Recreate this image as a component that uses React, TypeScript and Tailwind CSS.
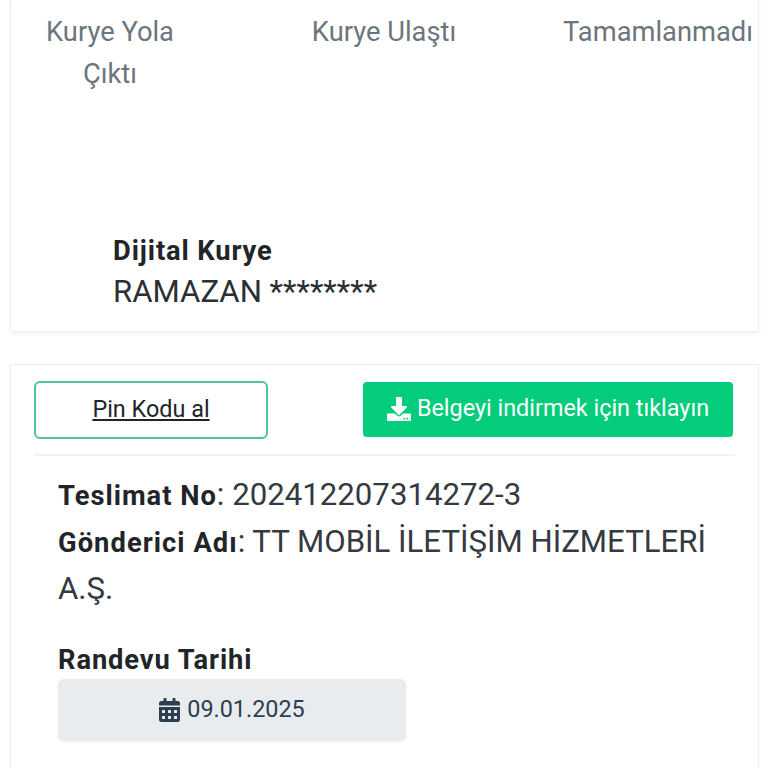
import React from 'react';
import { FaCalendarAlt, FaDownload } from 'react-icons/fa';

const App: React.FC = () => {
  return (
    <div className="w-[768px] h-[768px] overflow-hidden bg-white pl-[10px] pr-[9px] font-['Roboto',sans-serif]">
      {/* Courier card */}
      <div className="h-[332px] bg-white border-x border-b border-[#eceeef] shadow-[0_2px_4px_rgba(0,0,0,0.05)] rounded-b-[2px] flex flex-col">
        <div className="flex items-start pt-[11px] pl-[19px] text-center text-[27.3px] leading-[42px] text-[#6c757d]">
          <div className="w-[160px]">Kurye Yola Çıktı</div>
          <div className="w-[200px] ml-[94px]">Kurye Ulaştı</div>
          <div className="w-[190px] ml-[79px]">Tamamlanmadı</div>
        </div>
        <div className="pl-[102px] pt-[136px]">
          <div className="text-[27.3px] leading-[40px] font-bold text-[#212529] tracking-[0.9px]">Dijital Kurye</div>
          <div className="text-[31.2px] leading-[41px] text-[#2b3035]">RAMAZAN ********</div>
        </div>
      </div>

      {/* Delivery card */}
      <div className="mt-[32px] h-[420px] bg-white border-x border-t border-[#eceeef] px-[23px]">
        <div className="flex justify-between items-center pt-[16px] pb-[15px] border-b-2 border-[#f1f2f3]">
          <button className="w-[234px] h-[58px] border-2 border-[#4fc3a1] rounded-[6px] text-[23.4px] text-[#212529] underline bg-white">
            Pin Kodu al
          </button>
          <button className="w-[370px] h-[55px] mr-[2px] mb-[2px] bg-[#03cc7b] rounded-[4px] text-[23.4px] text-white flex items-center justify-center gap-[6px]">
            <FaDownload className="w-[24px] h-[24px]" />
            Belgeyi indirmek için tıklayın
          </button>
        </div>
        <div className="pl-[24px] pt-[16px]">
          <div className="text-[31.2px] leading-[46px] text-[#343a40]">
            <span className="text-[27.3px] font-bold text-[#212529] tracking-[1px]">Teslimat No</span>: 202412207314272-3
          </div>
          <div className="text-[31.2px] leading-[46px] text-[#343a40]">
            <span className="text-[27.3px] font-bold text-[#212529] tracking-[1.05px]">Gönderici Adı</span>: TT MOBİL İLETİŞİM HİZMETLERİ A.Ş.
          </div>
          <div className="mt-[29px] text-[27.3px] leading-[38px] font-bold text-[#212529] tracking-[0.9px]">Randevu Tarihi</div>
          <div className="w-[348px] h-[62px] bg-[#e9ecef] rounded-[6px] shadow-[0_1px_3px_rgba(0,0,0,0.08)] flex items-center justify-center gap-[7px] text-[23.4px] text-[#2c3e50]">
            <FaCalendarAlt className="w-[21px] h-[24px]" />
            09.01.2025
          </div>
        </div>
      </div>
    </div>
  );
};

export default App;
